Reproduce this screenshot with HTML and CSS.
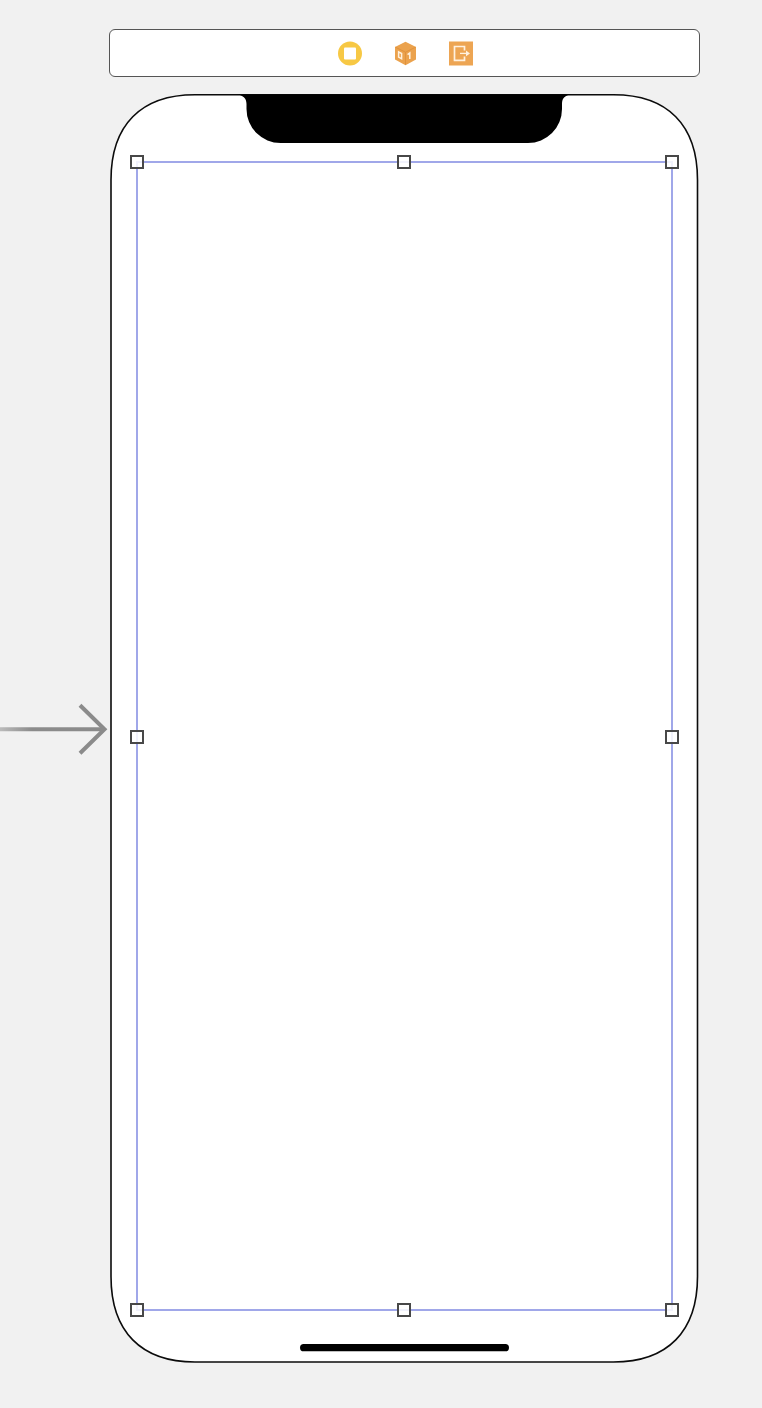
FILE: index.html
```html
<!DOCTYPE html>
<html lang="en">
<head>
<meta charset="utf-8">
<title>Storyboard</title>
<link rel="stylesheet" href="styles.css">
</head>
<body>
<main class="canvas">
  <header class="dock">
    <svg class="icon" viewBox="0 0 24 24"><circle cx="12" cy="12.500" r="12" fill="#f7c844"/><rect x="6" y="6.500" width="12" height="12" rx="1" fill="#fff"/></svg>
    <svg class="icon" viewBox="0 0 24 24"><path d="M11.500 0.800 22 6V18.500L11.500 24.200 1 18.500V6Z" fill="#eba24d"/><path d="M1.400 6.200 11.500 11.200 21.600 6.200M11.500 11.200V23.700" fill="none" stroke="#df903a" stroke-width=".9"/><path d="M4.600 10.800 7.600 12.500V17.800L4.600 16.100ZM13.600 13.600 15.800 12V18" fill="none" stroke="#fff1de" stroke-width="1.500"/></svg>
    <svg class="icon" viewBox="0 0 24 24"><rect y=".5" width="24" height="24" fill="#eda553"/><path d="M15.500 9.500V5.500H5.500V19.300H15.500V15.500" fill="none" stroke="#fff1df" stroke-width="1.700"/><path d="M11 12.400H18" stroke="#fff1df" stroke-width="1.300"/><path d="M17 9.600 21 12.400 17 15.200Z" fill="#fff1df"/></svg>
  </header>
  <section class="phone">
    <svg class="device" viewBox="0 0 590 1270">
      <path d="M2 87C2 32 32 1.800 86 1.800H504.500C558.500 1.800 588.500 32 588.500 87V1183.500C588.500 1238.500 558.500 1269 504.500 1269H86C32 1269 2 1238.500 2 1183.500Z" fill="#fff" stroke="#0b0b0b" stroke-width="1.600"/>
      <path d="M127 1.500C134 2 137.500 5 137.500 11V16A34 34 0 0 0 171.500 50H419A34 34 0 0 0 453 16V11C453 5 456 2 463 1.500Z"/>
      <rect x="191" y="1251" width="209" height="7.300" rx="3.650"/>
    </svg>
    <div class="selection">
      <i class="handle nw"></i><i class="handle n"></i><i class="handle ne"></i>
      <i class="handle w"></i><i class="handle e"></i>
      <i class="handle sw"></i><i class="handle s"></i><i class="handle se"></i>
    </div>
  </section>
  <svg class="entry" viewBox="0 0 110 60">
    <defs><linearGradient id="fade" gradientUnits="userSpaceOnUse" x1="-6" y1="0" x2="32" y2="0"><stop stop-color="#c4c4c4"/><stop offset="1" stop-color="#8b8b8b"/></linearGradient></defs>
    <path d="M0 29.300H104" stroke="url(#fade)" stroke-width="4"/>
    <path d="M80 5.200 104.500 29.300 80 53.300" fill="none" stroke="#8b8b8b" stroke-width="4"/>
  </svg>
</main>
</body>
</html>
```
FILE: styles.css
```css
* { box-sizing: border-box; }
body { margin: 0; background: #f1f1f1; font-family: Inter, sans-serif; }
.canvas {
  position: relative;
  height: 1408px;
  padding: 29px 0 0 109px;
  overflow: hidden;
}
.dock {
  display: flex;
  justify-content: center;
  align-items: center;
  gap: 31.5px;
  width: 591px;
  height: 48px;
  padding-left: 2px;
  border: 1px solid #555;
  border-radius: 6px;
  background: #fff;
}
.icon { width: 24px; height: 24px; overflow: visible; }
.phone { position: relative; width: 590px; height: 1270px; margin-top: 16px; }
.device { display: block; width: 590px; height: 1270px; }
.selection {
  position: absolute;
  left: 27px;
  top: 68px;
  width: 537px;
  height: 1150px;
  border: 2px solid #a0a7e9;
}
.handle {
  position: absolute;
  width: 14px;
  height: 14px;
  border: 2px solid #484848;
  background: rgba(255, 255, 255, .85);
  background-clip: padding-box;
  transform: translate(-50%, -50%);
}
.nw, .w, .sw { left: -1px; }
.n, .s { left: calc(50% - .5px); }
.ne, .e, .se { left: calc(100% + 1px); }
.nw, .n, .ne { top: -1px; }
.w, .e { top: calc(50% + 1px); }
.sw, .s, .se { top: calc(100% + 1px); }
.entry { position: absolute; left: 0; top: 700px; width: 110px; height: 60px; }
```
